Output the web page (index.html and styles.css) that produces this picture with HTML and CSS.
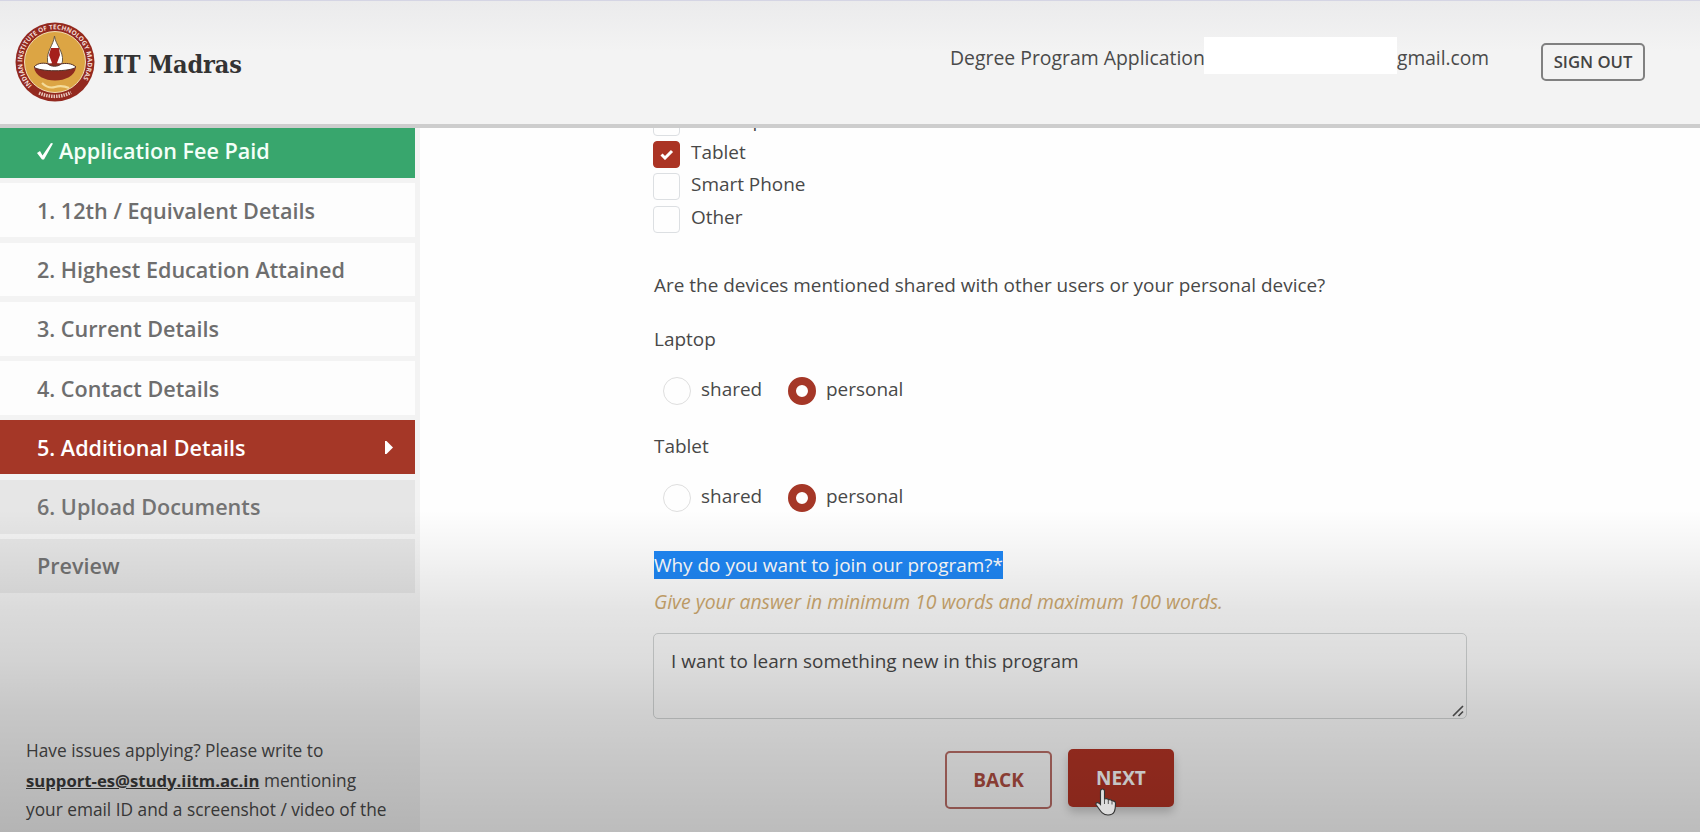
FILE: index.html
```html
<!DOCTYPE html>
<html lang="en">
<head>
<meta charset="utf-8">
<title>IIT Madras</title>
<link rel="stylesheet" href="styles.css">
</head>
<body>
<header class="header">
  <div class="brand">
    <svg class="logo" viewBox="0 0 80 80">
      <defs><path id="ring" d="M14.300 66.500A37 37 0 1 1 65.700 66.500" transform="translate(4.700 4.700) scale(.8825)"/></defs>
      <circle cx="40" cy="40" r="39.500" fill="#93291f"/>
      <circle cx="40" cy="40" r="30.500" fill="#dca544" stroke="#f0dcb4" stroke-width="1"/>
      <text class="ring-text"><textPath href="#ring" textLength="146">INDIAN INSTITUTE OF TECHNOLOGY MADRAS</textPath></text>
      <path d="M24 71q16 7 32-.500" fill="none" stroke="#e8c8bd" stroke-width="3.500" stroke-dasharray="1.500 1"/>
      <path d="M39.500 14c1 9 9 15 8 25-1 5-3 8-7.500 8s-7-3-7.500-8c-1-10 6-16 7-25z" fill="#fff" stroke="#6a5a45" stroke-width="1"/>
      <path d="M36 26h8l1 7-3 8 2 4h-8l1-4-3-8z" fill="#a51f1c"/>
      <path d="M19 45c5-5 37-5 42 0-2 18-40 18-42 0z" fill="#8f2a1f"/>
      <path d="M19 45c4-5 12-4 14-3 3 3 10 3 13 0 4-1 11-1 15 3-5 5-37 5-42 0z" fill="#fff" stroke="#54332a" stroke-width="1"/>
      <path d="M27 61q6 6 13 4t14 1" fill="none" stroke="#f4dc9a" stroke-width="2.200"/>
    </svg>
    <span class="brand-name">IIT Madras</span>
  </div>
  <div class="account">
    <span class="acc-a">Degree Program Application</span><span class="mask"></span><span class="acc-b">gmail.com</span>
    <button class="signout">SIGN OUT</button>
  </div>
</header>
<div class="body">
  <aside class="sidebar">
    <nav class="nav">
      <a class="item paid"><svg class="tick" viewBox="0 0 16 18"><path d="M0 11l3-2 2.500 4.500L14 1l2 .500L7 17.500H5z" fill="#fff"/></svg><span>Application Fee Paid</span></a>
      <a class="item">1. 12th / Equivalent Details</a>
      <a class="item">2. Highest Education Attained</a>
      <a class="item">3. Current Details</a>
      <a class="item">4. Contact Details</a>
      <a class="item active">5. Additional Details<svg class="arrow" viewBox="0 0 8 13"><path d="M0 0h1.500L8 6.500 1.500 13H0z" fill="#fff"/></svg></a>
      <a class="item off">6. Upload Documents</a>
      <a class="item off">Preview</a>
    </nav>
    <p class="help">Have issues applying? Please write to<br><b>support-es@study.iitm.ac.in</b> mentioning<br>your email ID and a screenshot / video of the<br>issue.</p>
  </aside>
  <main class="main">
    <div class="checks">
      <label class="check"><i class="box"></i><span>Desktop</span></label>
      <label class="check"><i class="box on"><svg viewBox="0 0 14 11"><path d="M1.500 5.500l3.500 3.500 7-7" fill="none" stroke="#fff" stroke-width="3"/></svg></i><span>Tablet</span></label>
      <label class="check"><i class="box"></i><span>Smart Phone</span></label>
      <label class="check"><i class="box"></i><span>Other</span></label>
    </div>
    <p class="q q1">Are the devices mentioned shared with other users or your personal device?</p>
    <p class="q q2">Laptop</p>
    <div class="radios"><i class="radio"></i><span class="shared">shared</span><i class="radio on"></i><span>personal</span></div>
    <p class="q q3">Tablet</p>
    <div class="radios second"><i class="radio"></i><span class="shared">shared</span><i class="radio on"></i><span>personal</span></div>
    <p class="why"><span class="sel">Why do you want to join our program?*</span></p>
    <p class="hint">Give your answer in minimum 10 words and maximum 100 words.</p>
    <div class="area">I want to learn something new in this program<svg class="grip" viewBox="0 0 12 12"><path d="M1 11L11 1M6.500 11L11 6.500" stroke="#555" stroke-width="1.700" fill="none"/></svg></div>
    <div class="actions">
      <button class="btn back">BACK</button>
      <button class="btn next">NEXT</button>
    </div>
  </main>
</div>
<div class="shade"></div>
<svg class="cursor" viewBox="0 0 22 30"><path d="M7.500 2c1.400 0 2 1 2 2.200V12c3-1 3.500 0 4 .8 2-.6 3 0 3.500 1.200 2.500-.4 3.500.8 3.500 2.500 0 6-.5 11.500-7.500 11.500-6 0-8-5-12-10.500C.5 15.500 3 14.500 5.500 17.500V4.200C5.500 3 6.200 2 7.500 2z" fill="#dedede" stroke="#333" stroke-width="1.100"/><path d="M9.500 12v5M13.300 13v4M17 14.500v3" stroke="#555" fill="none"/></svg>
</body>
</html>
```
FILE: styles.css
```css
* { box-sizing: border-box; }
body { margin: 0; width: 1700px; height: 832px; overflow: hidden; position: relative; display: flex; flex-direction: column; background: #fefefe; color: #484848; font-family: "Open Sans", "Noto Sans", sans-serif; font-size: 18.940px; }
p { margin: 0; }
button { font-family: inherit; font-weight: 600; padding: 0; background: none; }
.header { height: 128px; flex: none; display: flex; justify-content: space-between; align-items: flex-start; background: linear-gradient(#ebebec, #f3f3f3 50px, #f3f3f3); border-bottom: 4px solid #cdcdcd; border-top: 1px solid #d5d5e4; z-index: 1; }
.brand { display: flex; align-items: center; padding: 21px 0 0 15px; }
.logo { width: 80px; height: 80px; margin-right: 7px; }
.ring-text { font: 700 6.5px "Open Sans", sans-serif; fill: #f3ded8; }
.brand-name { font-family: "Roboto Slab", "DejaVu Serif", serif; font-stretch: condensed; font-weight: 700; font-size: 25px; letter-spacing: -.1px; color: #333; padding: 4px 0 0 1px; }
.account { display: flex; align-items: flex-start; padding: 36px 55px 0 0; line-height: 42px; color: #4a4a4a; }
.acc-a { width: 254px; white-space: nowrap; font-size: 19.400px; }
.mask { width: 193px; height: 37px; background: #fff; }
.acc-b { width: 144px; font-size: 19.200px; }
.signout { width: 104px; height: 38px; margin-top: 6px; border: 2px solid #808080; border-radius: 5px; font-size: 16.700px; padding-bottom: 2px; color: #444; }
.body { flex: 1; display: flex; min-height: 0; }
.sidebar { width: 420px; flex: none; background: #f3f3f3; display: flex; flex-direction: column; }
.nav { display: flex; flex-direction: column; gap: 5.500px; padding-right: 5px; margin-top: -4px; }
.item { height: 53.800px; display: flex; align-items: center; padding-left: 37px; background: #fdfdfd; font-weight: 600; font-size: 21.600px; color: #6e6e6e; }
.paid { background: #38a66d; color: #f4fff8; }
.tick { width: 16px; height: 18px; margin-right: 6px; }
.active { background: #a53727; color: #fff; }
.arrow { width: 8px; height: 13px; margin: 0 22px 0 auto; }
.off { background: #e6e6e6; color: #737373; }
.help { margin: 143.500px 0 0 26px; font-size: 17.300px; line-height: 29.300px; white-space: nowrap; }
.help b { font-weight: 700; font-size: 16.700px; text-decoration: underline; color: #3a3a3a; }
.main { padding-left: 233px; flex: 1; display: flex; flex-direction: column; }
.checks { margin-top: -22px; }
.check { display: flex; height: 32.400px; align-items: center; }
.check span { padding-bottom: 5px; }
.box { width: 27px; height: 27px; border: 1.500px solid #dcdfe2; border-radius: 4px; margin-right: 11px; display: flex; align-items: center; justify-content: center; }
.box.on { background: #ab3424; border-color: #ab3424; }
.box svg { width: 14px; height: 11px; }
.q { line-height: 28px; padding-left: 1px; }
.q1 { margin-top: 35.500px; }
.q2 { margin-top: 26px; }
.q3 { margin-top: 27.500px; }
.radios { display: flex; align-items: center; height: 28px; margin-top: 23.500px; padding-left: 10px; }
.second { margin-top: 24px; }
.radios span { padding-bottom: 4px; }
.radio { width: 28px; height: 28px; border-radius: 50%; border: 1.500px solid #dedede; margin-right: 10px; }
.radio.on { border: 8.500px solid #a53727; }
.shared { width: 87px; }
.why { margin-top: 39px; line-height: 28px; padding-left: 1px; }
.sel { display: inline-block; background: #1f87f5; color: #fff; }
.hint { font-style: italic; font-size: 19.400px; color: #cfaa70; line-height: 28px; margin-top: 9px; padding-left: 1px; }
.area { position: relative; width: 814px; height: 86px; margin-top: 16.500px; border: 1.500px solid #d3d6d6; border-radius: 5px; padding: 13px 17px; line-height: 28px; }
.grip { position: absolute; right: 2px; bottom: 1px; width: 12px; height: 12px; }
.actions { display: flex; gap: 16px; padding: 30px 0 0 292px; }
.btn { width: 107px; height: 58px; border-radius: 5px; font-size: 19px; font-weight: 700; }
.back { border: 2px solid #bb6f68; color: #b04e42; margin-top: 2px; }
.next { width: 106px; border: 0; background: #b43425; color: #fff; box-shadow: 0 5px 10px rgba(0,0,0,.2); }
.shade { position: absolute; left: 0; right: 0; top: 510px; bottom: 0; pointer-events: none; z-index: 2; background: linear-gradient(rgba(0,0,0,0), rgba(0,0,0,.05) 16%, rgba(0,0,0,.1) 31%, rgba(0,0,0,.135) 47%, rgba(0,0,0,.18) 62%, rgba(0,0,0,.215) 78%, rgba(0,0,0,.26)); }
.cursor { position: absolute; left: 1095px; top: 787px; width: 22px; height: 30px; z-index: 3; }
```
